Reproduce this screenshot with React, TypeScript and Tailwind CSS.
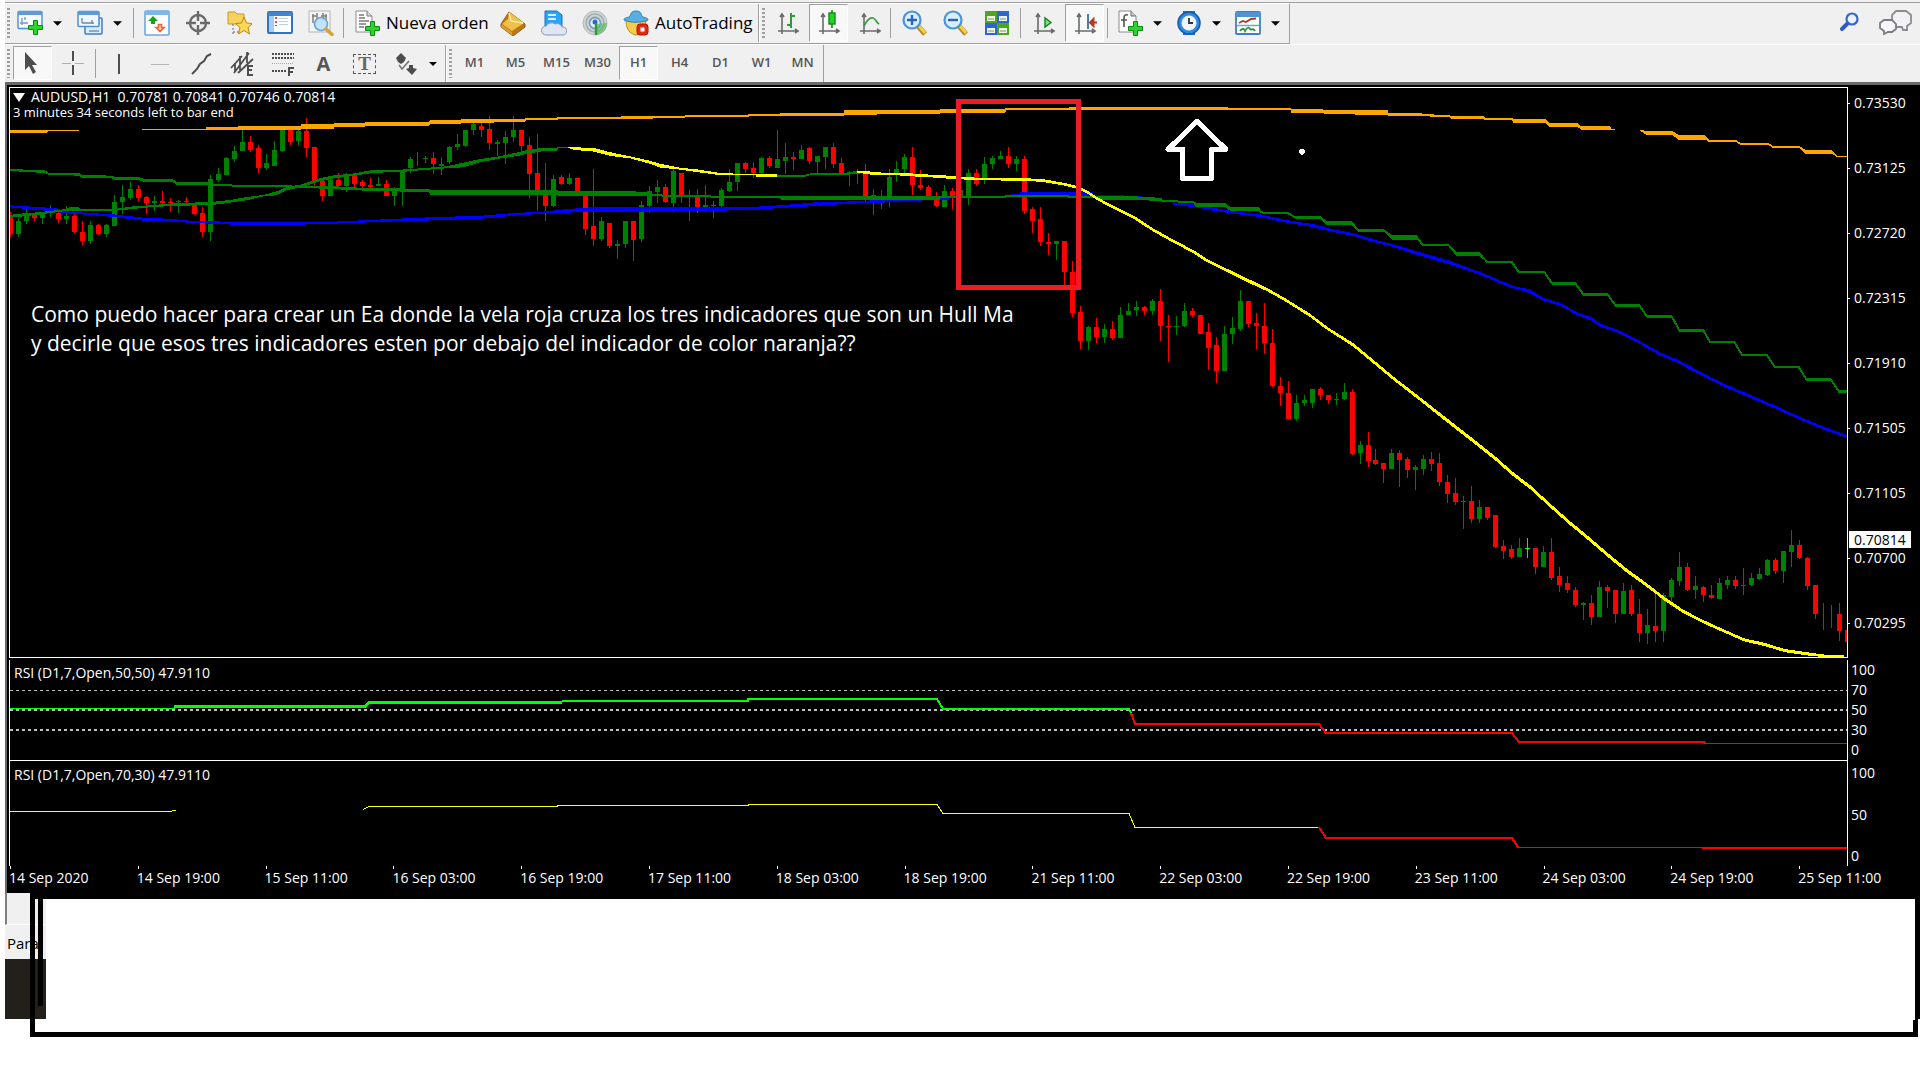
import React from 'react';
import type { ReactNode } from 'react';

/* ---------- toolbar icons ---------- */

function Svg({ children }: { children: ReactNode }) {
  return (
    <svg viewBox="0 0 26 26" className="block h-[26px] w-[26px] shrink-0" aria-hidden="true">
      {children}
    </svg>
  );
}

const GreenPlus = ({ x, y }: { x: number; y: number }) => (
  <path
    transform={`translate(${x} ${y})`}
    d="M5.5 .5h4v5h5v4h-5v5h-4v-5h-5v-4h5z"
    fill="#2bd62b"
    stroke="#0a8a0f"
    strokeWidth="1"
  />
);

const AxisBase = () => (
  <path d="M7 4v20M3 21h20M5 7l2-3 2 3M20 19l3 2-3 2" fill="none" stroke="#6b6b6b" strokeWidth="1.6" />
);

const NewChart = () => (
  <Svg>
    <rect x="1" y="1.500" width="24" height="17" rx="1" fill="#f7fbff" stroke="#4a8fce" strokeWidth="1.4" />
    <rect x="1" y="1" width="24" height="4" fill="#5b9bd8" />
    <path d="M5 8v7M3 13h8M8 7v3" stroke="#7d98b5" strokeWidth="1.4" />
    <GreenPlus x={11} y={10} />
  </Svg>
);
const Profiles = () => (
  <Svg>
    <rect x="8" y="8" width="17" height="16" rx="1" fill="#dcebfa" stroke="#3f7fc0" strokeWidth="1.5" />
    <rect x="1" y="1.500" width="21" height="15" rx="1" fill="#f2f8ff" stroke="#4a8fce" strokeWidth="1.5" />
    <rect x="1" y="1" width="21" height="4" fill="#5b9bd8" />
    <path d="M5 8v5M5 13h12M15 10v4" stroke="#6e8bab" strokeWidth="1.4" fill="none" />
    <path d="M12 21h10" stroke="#6e8bab" strokeWidth="1.4" />
  </Svg>
);
const MarketWatch = () => (
  <Svg>
    <rect x="1" y="1" width="24" height="24" rx="1" fill="#fff" stroke="#6aa9e0" strokeWidth="1.6" />
    <rect x="1" y="1" width="24" height="4" fill="#7db8ec" />
    <path d="M9 6l5 5h-3v3H7v-3H4z" fill="#17a317" />
    <path d="M16 21.500l-4-4h2.500v-3h3v3H20z" fill="#ffd9c8" stroke="#f0632d" strokeWidth="1.6" />
  </Svg>
);
const DataWindow = () => (
  <Svg>
    <circle cx="13" cy="13" r="8" fill="none" stroke="#6b6b6b" strokeWidth="2.4" />
    <path d="M13 1v10M13 15v10M1 13h10M15 13h10" stroke="#6b6b6b" strokeWidth="2.4" />
  </Svg>
);
const Navigator = () => (
  <Svg>
    <path d="M2 2h7l2 2h7v10H2z" fill="#f5d35c" stroke="#c79a22" />
    <path d="M7 14v11M7 22h6" stroke="#888" strokeWidth="1.3" strokeDasharray="2 2" />
    <path d="M18 7l2.500 6 6 .5-4.500 4 1.500 6.500-5.500-3.500-5.500 3.500 1.500-6.500-4.500-4 6-.5z" fill="#ffd955" stroke="#b98717" />
  </Svg>
);
const Terminal = () => (
  <Svg>
    <rect x="1" y="2" width="24" height="21" rx="1" fill="#fff" stroke="#2f74bd" strokeWidth="2" />
    <rect x="1" y="2" width="24" height="4" fill="#3f86cf" />
    <rect x="2" y="6" width="5" height="16" fill="#a9cbee" />
    <path d="M9 7v9" stroke="#e02020" strokeWidth="1.6" strokeDasharray="2 2" />
    <path d="M12 8.500h9M12 11.500h9M12 14.500h9" stroke="#b9cfe6" />
  </Svg>
);
const Tester = () => (
  <Svg>
    <rect x="1" y="1" width="21" height="21" fill="#f4f4f4" stroke="#b5b5b5" />
    <path d="M5 4v9M4 6h4M9 3v10M15 3v8M18 4v6M13 6h6" stroke="#7e7e7e" strokeWidth="1.5" />
    <circle cx="13" cy="14" r="6.500" fill="#bfe0f8" fillOpacity=".9" stroke="#6ba3d6" strokeWidth="1.6" />
    <path d="M18 19l6 5.500" stroke="#d9a12b" strokeWidth="3.4" strokeLinecap="round" />
  </Svg>
);
const NewOrder = () => (
  <Svg>
    <path d="M2 1h11l5 5v16H2z" fill="#fff" stroke="#8a8a8a" />
    <path d="M13 1v5h5" fill="#ddd" stroke="#777" />
    <path d="M5 5h5M5 8h6M5 11h10M5 14h7M5 17h5" stroke="#7a7a7a" strokeWidth="1.4" />
    <GreenPlus x={11} y={11} />
  </Svg>
);
const MetaEditor = () => (
  <Svg>
    <path d="M9 2L25 14v3l-12 9L1 17v-3z" fill="#b97a14" stroke="#8f5f0e" />
    <path d="M9 2L24 13 12 21 2 14 8 9z" fill="#f0bf48" />
    <path d="M9 3l2 8 12 2" fill="none" stroke="#fff0b0" strokeWidth="1.4" />
    <path d="M2 15l10 7v3L1 17z" fill="#dca030" />
  </Svg>
);
const Cloud = () => (
  <Svg>
    <path d="M4 1h12l5 4v11H4z" fill="#2aa5f5" stroke="#1276c4" />
    <path d="M7 5h8M7 9h8" stroke="#d7f0ff" strokeWidth="2" />
    <path d="M5 25a4.500 4.500 0 0 1 0-9 6 6 0 0 1 9-2 5 5 0 0 1 7 3 4 4 0 0 1 1 8z" fill="#dfe5f2" stroke="#8794b8" />
  </Svg>
);
const Signals = () => (
  <Svg>
    <circle cx="13" cy="13" r="12" fill="#cfd5d6" stroke="#b2babb" />
    <circle cx="13" cy="13" r="9" fill="none" stroke="#9fb0ae" strokeWidth="1.5" />
    <circle cx="13" cy="13" r="5.500" fill="#e7eff5" stroke="#7d9cc0" strokeWidth="1.8" />
    <path d="M14 25V14c4 0 8-1 11-1 0 6-4 11-11 12z" fill="#54b85b" fillOpacity=".6" />
    <circle cx="13" cy="12" r="2.500" fill="#2b66c4" />
    <path d="M14 13v12" stroke="#2c9b35" strokeWidth="2.4" />
  </Svg>
);
const Auto = () => (
  <Svg>
    <path d="M3 10c0 8 3 14 10 15 6-1 10-7 10-15z" fill="#f7cd49" stroke="#bb8a1b" />
    <path d="M1 10c0-3 5-2 6-4s1-5 6-5 5 3 6 5 6 1 6 4c-5 3-19 3-24 0z" fill="#58aee0" stroke="#2d7fb5" />
    <rect x="14" y="14" width="11" height="11" rx="3" fill="#e32b14" stroke="#a81505" />
    <rect x="17.500" y="17.500" width="4" height="4" fill="#fff" />
  </Svg>
);
const Bars = () => (
  <Svg>
    <AxisBase />
    <path d="M16 3v15M12 15h4M16 6h4" stroke="#2f9a3a" strokeWidth="2" />
  </Svg>
);
const Candles = () => (
  <Svg>
    <AxisBase />
    <path d="M16 0v18" stroke="#1c7d22" strokeWidth="1.6" />
    <rect x="13" y="3" width="6" height="11" fill="#22d32a" stroke="#128a18" strokeWidth="1.4" />
  </Svg>
);
const LineChart = () => (
  <Svg>
    <AxisBase />
    <path d="M7 16c3-6 6-9 9-8s3 4 6 6" fill="none" stroke="#3f9a48" strokeWidth="1.8" />
  </Svg>
);
const Zoom = ({ minus }: { minus?: boolean }) => (
  <Svg>
    <path d="M16 16l7 8" stroke="#b8841b" strokeWidth="5" />
    <path d="M17 16l6 7" stroke="#f6d04b" strokeWidth="3" />
    <circle cx="10" cy="10" r="8.500" fill="#d9efff" stroke="#4b93d8" strokeWidth="2.2" />
    <path d={minus ? 'M5 10h10' : 'M5 10h10M10 5v10'} stroke="#2d62b4" strokeWidth="2.4" />
  </Svg>
);
const Tiles = () => (
  <Svg>
    <rect x="1" y="1" width="12" height="12" fill="#4ea61e" />
    <rect x="13" y="1" width="12" height="12" fill="#2d66d0" />
    <rect x="1" y="13" width="12" height="12" fill="#2d66d0" />
    <rect x="13" y="13" width="12" height="12" fill="#4ea61e" />
    <path d="M3 6h8v5H3zM15 6h8v5h-8zM3 18h8v5H3zM15 18h8v5h-8z" fill="#eef4ea" />
    <path d="M4 9h6M16 9h6M4 21h6M16 21h6" stroke="#9fb7a0" strokeWidth="1.4" />
  </Svg>
);
const AutoScroll = () => (
  <Svg>
    <AxisBase />
    <path d="M14 8v9l6-4.500z" fill="#7fe087" stroke="#188222" strokeWidth="1.4" />
  </Svg>
);
const ChartShift = () => (
  <Svg>
    <AxisBase />
    <path d="M16 4v15" stroke="#3b6e9c" strokeWidth="1.8" />
    <path d="M25 12.500h-7M21.500 9l-3.500 3.500 3.500 3.500z" stroke="#b63a17" strokeWidth="2" fill="#b63a17" />
  </Svg>
);
const Indicators = () => (
  <Svg>
    <path d="M2 1h12l5 5v16H2z" fill="#fff" stroke="#8a8a8a" />
    <path d="M14 1v5h5" fill="#ccc" stroke="#666" />
    <path d="M11 5c-3-1-4 1-4 3v9M4 10h6" fill="none" stroke="#555" strokeWidth="1.6" />
    <GreenPlus x={11} y={11} />
  </Svg>
);
const Clock = () => (
  <Svg>
    <path d="M7 1h12v4H7zM7 21h12v4H7z" fill="#1f6fc2" />
    <circle cx="13" cy="13" r="11" fill="#2e8be0" stroke="#155ba8" strokeWidth="1.5" />
    <circle cx="13" cy="13" r="7.500" fill="#eef6fd" />
    <path d="M13 8v5h4" fill="none" stroke="#333" strokeWidth="1.8" />
  </Svg>
);
const Template = () => (
  <Svg>
    <rect x="1" y="2" width="24" height="22" rx="1" fill="#fff" stroke="#3d7fc2" strokeWidth="1.8" />
    <rect x="1" y="2" width="24" height="5" fill="#5293d4" />
    <path d="M4 13l4-2 3 1 5-3 5-.5" fill="none" stroke="#b13922" strokeWidth="1.8" />
    <path d="M2 15.500h22" stroke="#6fa4d8" strokeWidth="1.5" />
    <path d="M5 21c2-3 4-3 5 0 2-4 4-4 5-2s3-2 5 2" fill="none" stroke="#2f9440" strokeWidth="1.8" />
  </Svg>
);

const Cursor = () => (
  <Svg>
    <path d="M5 2v18l4-4 4 8 3-2-4-7h5z" fill="#4d4d4d" />
  </Svg>
);
const Cross = () => (
  <Svg>
    <path d="M12 1v10M12 15v10" stroke="#4d4d4d" strokeWidth="2" />
    <path d="M1 13.500h9M14 13.500h9" stroke="#b0b0b0" strokeWidth="1" />
  </Svg>
);
const VLine = () => (
  <Svg>
    <path d="M13 3v20" stroke="#4d4d4d" strokeWidth="2" />
  </Svg>
);
const HLine = () => (
  <Svg>
    <path d="M4 13.500h18" stroke="#b5b5b5" strokeWidth="1" />
  </Svg>
);
const Trend = () => (
  <Svg>
    <path d="M4 23l5-5 3-5 4-3 3-5 4-2" fill="none" stroke="#4d4d4d" strokeWidth="2" />
  </Svg>
);
const Channel = () => (
  <Svg>
    <path d="M2 17L13 5M5 22L20 2M9 22L24 8M6 12v9M11 5v14M18 1v11" stroke="#4d4d4d" strokeWidth="1.8" fill="none" />
    <path d="M24 15h-5v9h5M19 19h4" stroke="#4d4d4d" strokeWidth="2" fill="none" />
  </Svg>
);
const Fibo = () => (
  <Svg>
    <path d="M2 3h22M2 7h22M2 20h14" stroke="#4d4d4d" strokeWidth="2" strokeDasharray="2 1" />
    <path d="M2 12.500h22" stroke="#aaa" strokeWidth="1" strokeDasharray="1 1" />
    <path d="M24 17h-5v8M19 21h4" stroke="#4d4d4d" strokeWidth="2" fill="none" />
  </Svg>
);
const LetterA = () => <span className="text-[20px] leading-[26px] font-bold text-[#555]">A</span>;
const LabelT = () => (
  <span className="block border border-dashed border-[#555] px-1 font-['Liberation_Serif',serif] text-[19px] leading-[18px] font-bold text-[#666]">
    T
  </span>
);
const Shapes = () => (
  <Svg>
    <path d="M8 2l5 5-2 4-3 2-3-2-2-4z" fill="#4d4d4d" />
    <path d="M6 14l3 4 7-8" fill="none" stroke="#777" strokeWidth="1.6" />
    <path d="M16 14h4v3l4 1-5 6-6-6 3-1z" fill="#4d4d4d" />
  </Svg>
);

/* ---------- toolbar parts ---------- */

const Grip = () => (
  <span className="my-1 ml-[2px] w-[3px] shrink-0 bg-[repeating-linear-gradient(to_bottom,#a0a0a0_0_2px,#f0f0f0_2px_4px)]" />
);
const Sep = () => <span className="my-1 w-px shrink-0 bg-[#a0a0a0]" />;

function Tool({ label, children, pressed }: { label: string; children: ReactNode; pressed?: boolean }) {
  return (
    <button
      type="button"
      aria-label={label}
      aria-pressed={pressed}
      className={
        pressed
          ? 'mx-px flex w-[39px] shrink-0 items-center justify-center border border-t-[#a0a0a0] border-r-white border-b-white border-l-[#a0a0a0] bg-[#f8f8f8]'
          : 'flex w-[41px] shrink-0 items-center justify-center'
      }
    >
      {children}
    </button>
  );
}
function Menu({ label, small, children }: { label: string; small?: boolean; children: ReactNode }) {
  return (
    <button type="button" aria-label={label} aria-haspopup="menu" className="flex shrink-0 items-center gap-[10px] px-1">
      {children}
      <svg viewBox="0 0 10 5" className={small ? 'h-1 w-2' : 'h-[5px] w-[9px]'} aria-hidden="true">
        <path d="M0 0h10L5 5z" fill="#000" />
      </svg>
    </button>
  );
}

const timeframes = ['M1', 'M5', 'M15', 'M30', 'H1', 'H4', 'D1', 'W1', 'MN'];

function Toolbars() {
  return (
    <header className="bg-[#f0f0f0] pt-[2px]">
      <div className="flex justify-between border-t border-[#a0a0a0]">
        <div className="flex h-[41px] border-t border-r border-b border-t-white border-r-[#a0a0a0] border-b-[#a0a0a0] pb-px">
          <Grip />
          <div className="flex gap-[7px] pr-1 pl-[3px]">
            <Menu label="Nuevo gráfico"><NewChart /></Menu>
            <Menu label="Perfiles"><Profiles /></Menu>
          </div>
          <div className="w-[3px]" />
          <Sep />
          <div className="flex px-[2px]">
            <Tool label="Observación del mercado"><MarketWatch /></Tool>
            <Tool label="Ventana de datos"><DataWindow /></Tool>
            <Tool label="Navegador"><Navigator /></Tool>
            <Tool label="Terminal"><Terminal /></Tool>
            <Tool label="Probador"><Tester /></Tool>
          </div>
          <Sep />
          <button type="button" className="flex w-[148px] items-center gap-[6px] pl-[10px] text-[17px] whitespace-nowrap text-black">
            <NewOrder />
            Nueva orden
          </button>
          <Tool label="MetaEditor"><MetaEditor /></Tool>
          <Tool label="Nube"><Cloud /></Tool>
          <Tool label="Señales"><Signals /></Tool>
          <button type="button" className="flex w-[143px] items-center gap-[6px] pl-2 text-[17px] whitespace-nowrap text-black">
            <Auto />
            AutoTrading
          </button>
          <span className="w-px shrink-0 bg-[#a0a0a0]" />
          <span className="w-px shrink-0 bg-white" />
          <Grip />
          <div className="flex pl-[2px]">
            <Tool label="Barras"><Bars /></Tool>
            <Tool label="Velas" pressed><Candles /></Tool>
            <Tool label="Línea"><LineChart /></Tool>
          </div>
          <Sep />
          <div className="flex px-[3px]">
            <Tool label="Acercar"><Zoom /></Tool>
            <Tool label="Alejar"><Zoom minus /></Tool>
            <Tool label="Mosaico"><Tiles /></Tool>
          </div>
          <Sep />
          <div className="flex px-[2px]">
            <Tool label="Desplazamiento automático"><AutoScroll /></Tool>
            <Tool label="Desplazar gráfico" pressed><ChartShift /></Tool>
          </div>
          <Sep />
          <div className="flex gap-[6px] px-[5px]">
            <Menu label="Indicadores"><Indicators /></Menu>
            <Menu label="Periodos"><Clock /></Menu>
            <Menu label="Plantillas"><Template /></Menu>
          </div>
        </div>
        <div className="flex items-center gap-[18px] pr-[7px] pb-1">
          <button type="button" aria-label="Buscar">
            <svg viewBox="0 0 24 24" className="h-6 w-6" aria-hidden="true">
              <circle cx="15" cy="9" r="5.500" fill="#eaf1ff" stroke="#3566cc" strokeWidth="2.2" />
              <path d="M10 14l-5 5" stroke="#2e5cc0" strokeWidth="4" strokeLinecap="round" />
            </svg>
          </button>
          <button type="button" aria-label="Chat">
            <svg viewBox="0 0 34 26" className="h-[26px] w-[34px]" aria-hidden="true">
              <path d="M17 2h10l5 4v8l-4 3v4h-4l-1-3h-5l-5-4V6z" fill="#f2f2f6" stroke="#8c8c8c" strokeWidth="1.8" />
              <path d="M5 11h8l4 4v5l-4 3H9l-4 2v-3l-4-3v-5z" fill="#f6f6fb" stroke="#7d7d7d" strokeWidth="1.8" />
            </svg>
          </button>
        </div>
      </div>
      <div className="flex h-[38px] border-t border-white">
        <Grip />
        <div className="flex pt-px pb-[2px] pl-[2px]">
          <Tool label="Cursor" pressed><Cursor /></Tool>
          <Tool label="Cruz"><Cross /></Tool>
        </div>
        <div className="w-px" />
        <Sep />
        <div className="flex pl-[2px]">
          <Tool label="Línea vertical"><VLine /></Tool>
          <Tool label="Línea horizontal"><HLine /></Tool>
          <Tool label="Línea de tendencia"><Trend /></Tool>
          <Tool label="Canal equidistante"><Channel /></Tool>
          <Tool label="Retroceso de Fibonacci"><Fibo /></Tool>
          <Tool label="Texto"><LetterA /></Tool>
          <Tool label="Etiqueta de texto"><LabelT /></Tool>
          <div className="flex w-[60px] pl-1">
            <Menu label="Flechas" small><Shapes /></Menu>
          </div>
        </div>
        <span className="w-px bg-[#a0a0a0]" />
        <span className="w-px bg-white" />
        <Grip />
        <div className="flex border-r border-[#a0a0a0] pt-px pb-[2px] pl-[2px]">
          {timeframes.map((t) => (
            <Tool key={t} label={t} pressed={t === 'H1'}>
              <span className="text-[13px] font-semibold text-[#555]">{t}</span>
            </Tool>
          ))}
        </div>
      </div>
    </header>
  );
}

/* ---------- price chart (three drawing units per pixel) ---------- */

type Candle = ['G' | 'R' | 'L', number, number, number, number];

const firstCandles: Candle[] = [
  ['R', 395, 410, 462, 470], ['G', 415, 423, 462, 470], ['G', 388, 400, 423, 432], ['R', 400, 405, 414, 423], ['G', 398, 402, 414, 432],
  ['G', 375, 388, 400, 411], ['R', 397, 399, 417, 429], ['G', 378, 408, 417, 432], ['R', 402, 408, 456, 462], ['R', 423, 456, 483, 495],
  ['G', 423, 435, 483, 491], ['R', 432, 435, 462, 465], ['G', 432, 435, 462, 470], ['G', 345, 366, 438, 438], ['G', 315, 351, 366, 402],
  ['G', 306, 327, 354, 360], ['R', 315, 327, 354, 366], ['R', 348, 351, 369, 402], ['G', 348, 363, 369, 393], ['R', 333, 363, 370, 375],
  ['R', 354, 366, 370, 396], ['G', 360, 363, 366, 399], ['R', 351, 363, 366, 369], ['R', 372, 375, 402, 405], ['R', 381, 399, 456, 470],
  ['G', 285, 297, 456, 483], ['G', 264, 282, 300, 306], ['G', 231, 234, 285, 285], ['G', 198, 213, 237, 246], ['G', 150, 186, 213, 213],
  ['R', 168, 186, 210, 216], ['R', 195, 204, 264, 279], ['G', 222, 249, 264, 270], ['G', 183, 210, 258, 258], ['G', 147, 150, 213, 216],
  ['R', 147, 150, 186, 195], ['G', 150, 153, 183, 198], ['R', 114, 153, 204, 231], ['R', 201, 201, 306, 318], ['R', 300, 303, 348, 363],
  ['G', 297, 300, 348, 348], ['R', 279, 300, 318, 318], ['G', 279, 282, 318, 336], ['R', 282, 285, 312, 321], ['R', 300, 306, 318, 327],
  ['R', 294, 315, 321, 333], ['G', 291, 312, 318, 318], ['R', 300, 312, 348, 348], ['G', 321, 333, 348, 378], ['G', 270, 273, 330, 378],
  ['G', 231, 237, 264, 279], ['R', 216, 231, 231, 258], ['G', 228, 234, 237, 249], ['R', 216, 234, 252, 282], ['G', 231, 252, 258, 285],
  ['G', 198, 201, 246, 252], ['G', 162, 192, 201, 210], ['G', 150, 150, 198, 201], ['G', 126, 132, 150, 165], ['R', 129, 138, 150, 171],
  ['R', 108, 147, 189, 210], ['G', 180, 186, 192, 228], ['G', 153, 171, 189, 252], ['G', 108, 150, 171, 186], ['R', 150, 150, 198, 213],
  ['R', 171, 195, 282, 354], ['R', 162, 279, 333, 393], ['R', 249, 345, 378, 423], ['G', 285, 297, 378, 381], ['R', 285, 291, 312, 315],
  ['G', 279, 294, 312, 315], ['R', 294, 294, 339, 339], ['R', 345, 345, 447, 465], ['R', 267, 438, 477, 498], ['G', 411, 423, 477, 483],
  ['R', 429, 429, 498, 504], ['G', 480, 492, 498, 537], ['G', 423, 423, 492, 504], ['R', 423, 423, 480, 543], ['G', 363, 375, 477, 486],
  ['G', 318, 333, 378, 399], ['G', 300, 321, 336, 369], ['R', 312, 321, 366, 369], ['G', 267, 273, 369, 396], ['R', 279, 279, 351, 369],
  ['G', 330, 345, 348, 423], ['R', 327, 348, 387, 399], ['G', 315, 375, 381, 396], ['G', 363, 375, 378, 414], ['G', 324, 330, 378, 381],
  ['G', 267, 306, 333, 336], ['G', 249, 249, 306, 333], ['R', 246, 249, 267, 279], ['R', 246, 264, 279, 294], ['G', 231, 234, 279, 282],
  ['R', 228, 234, 258, 264], ['G', 150, 237, 264, 264], ['G', 189, 231, 243, 282], ['R', 216, 231, 237, 270], ['G', 195, 210, 237, 237],
  ['R', 201, 204, 243, 252], ['G', 228, 228, 246, 279], ['G', 201, 201, 231, 267], ['R', 189, 201, 252, 264], ['R', 234, 249, 279, 282],
  ['R', 273, 280, 283, 318], ['G', 267, 273, 282, 312], ['R', 252, 282, 348, 363], ['R', 327, 345, 348, 405], ['R', 330, 366, 369, 387],
  ['G', 267, 291, 366, 381], ['G', 243, 267, 279, 306], ['G', 222, 231, 267, 279], ['R', 201, 231, 315, 345], ['R', 270, 315, 324, 330],
  ['R', 315, 321, 348, 348], ['R', 336, 357, 378, 381], ['G', 315, 333, 381, 381], ['R', 324, 333, 348, 387], ['G', 320, 330, 348, 380],
  ['G', 267, 279, 351, 375], ['R', 267, 279, 312, 318], ['G', 231, 252, 297, 312], ['G', 228, 234, 252, 267], ['G', 213, 228, 237, 237],
  ['R', 201, 228, 252, 264], ['G', 228, 237, 252, 273], ['R', 228, 237, 393, 402], ['R', 381, 387, 423, 459], ['R', 381, 417, 486, 498],
  ['R', 459, 486, 492, 525], ['G', 483, 483, 492, 540], ['R', 483, 483, 576, 615], ['R', 543, 576, 699, 711], ['R', 678, 696, 783, 807],
  ['G', 738, 741, 783, 810], ['R', 714, 741, 771, 789], ['G', 732, 747, 771, 789], ['R', 723, 747, 774, 780], ['G', 681, 705, 774, 774],
  ['G', 669, 693, 705, 705], ['G', 663, 681, 690, 708], ['R', 678, 681, 693, 705], ['G', 657, 663, 693, 705], ['R', 627, 663, 738, 783],
  ['R', 705, 738, 741, 846], ['G', 708, 738, 741, 765], ['G', 669, 693, 738, 741], ['R', 684, 693, 705, 711], ['R', 705, 705, 762, 762],
  ['R', 729, 756, 804, 870], ['R', 771, 795, 873, 909], ['G', 738, 762, 873, 873], ['G', 711, 744, 762, 792], ['G', 630, 663, 747, 753],
  ['R', 663, 663, 732, 741], ['R', 699, 729, 738, 807], ['R', 669, 738, 789, 822], ['R', 747, 789, 918, 921], ['R', 891, 918, 939, 978],
  ['R', 903, 939, 1017, 1020], ['G', 945, 969, 1017, 1023], ['G', 945, 960, 969, 978], ['G', 927, 927, 969, 984], ['R', 921, 927, 945, 960],
  ['R', 945, 945, 960, 972], ['G', 939, 957, 960, 975], ['G', 909, 936, 957, 960], ['R', 927, 936, 1122, 1125], ['G', 1083, 1095, 1119, 1152],
  ['R', 1056, 1095, 1143, 1161], ['R', 1107, 1140, 1152, 1156], ['R', 1149, 1149, 1167, 1209], ['G', 1107, 1119, 1167, 1167],
  ['R', 1110, 1119, 1140, 1221], ['R', 1131, 1137, 1170, 1194], ['G', 1155, 1161, 1170, 1230],
];

/* the closing stretch of the series, measured from 900 units down */
const lastCandles: Candle[] = [
  ['G', 225, 237, 267, 285], ['R', 216, 237, 252, 273], ['R', 219, 249, 306, 318], ['R', 285, 306, 342, 369], ['R', 294, 339, 366, 375],
  ['R', 348, 363, 366, 447], ['R', 318, 363, 417, 429], ['G', 360, 381, 417, 429], ['R', 381, 381, 414, 420], ['R', 405, 405, 501, 504],
  ['R', 480, 498, 513, 537], ['R', 495, 507, 531, 537], ['G', 474, 504, 531, 531], ['L', 474, 504, 507, 534], ['R', 504, 504, 561, 582],
  ['G', 498, 516, 561, 561], ['R', 474, 516, 594, 600], ['R', 561, 588, 615, 636], ['R', 588, 609, 630, 639], ['R', 621, 630, 675, 681],
  ['G', 666, 669, 675, 720], ['R', 645, 669, 711, 735], ['G', 603, 621, 711, 711], ['R', 615, 621, 633, 684], ['R', 630, 630, 702, 729],
  ['G', 609, 633, 702, 702], ['R', 615, 630, 702, 708], ['R', 657, 702, 759, 786], ['G', 687, 735, 759, 792], ['R', 639, 738, 753, 786],
  ['G', 639, 645, 753, 786], ['G', 594, 600, 651, 681], ['G', 516, 561, 603, 618], ['R', 549, 561, 630, 633], ['G', 588, 618, 630, 657],
  ['R', 618, 621, 645, 666], ['R', 615, 645, 654, 657], ['G', 594, 609, 657, 657], ['G', 588, 600, 615, 627], ['R', 588, 600, 618, 627],
  ['G', 564, 615, 618, 645], ['G', 579, 594, 615, 618], ['G', 564, 582, 597, 600], ['G', 537, 540, 585, 588], ['R', 534, 540, 573, 582],
  ['G', 513, 513, 573, 609], ['G', 450, 495, 516, 561], ['R', 480, 495, 534, 537], ['R', 531, 534, 618, 630], ['R', 615, 615, 702, 717],
  ['G', 669, 669, 669, 750], ['R', 675, 675, 675, 744], ['R', 669, 702, 753, 783], ['R', 735, 750, 786, 832],
];

const candles: Candle[] = [
  ...firstCandles,
  ...lastCandles.map(([c, h, t, b, l]): Candle => [c, h + 900, t + 900, b + 900, l + 900]),
];
const candleFill = { G: '#008000', R: '#ff0000', L: '#00ff00' };

/* a point is x, y and the line's thickness there */
type P = [number, number, number];
const at = (dx: number, dy: number, pts: P[]): P[] => pts.map(([x, y, w]): P => [x + dx, y + dy, w]);

function Ribbon({ pts, color, core = 4 }: { pts: P[]; color: string; core?: number }) {
  const top = pts.map(([x, y, w]) => `${x},${y - w / 2}`);
  const bottom = [...pts].reverse().map(([x, y, w]) => `${x},${y + w / 2}`);
  return (
    <g fill={color} stroke={color}>
      <polygon points={[...top, ...bottom].join(' ')} strokeWidth="0" />
      <polyline points={pts.map(([x, y]) => `${x},${y}`).join(' ')} fill="none" strokeWidth={core} />
    </g>
  );
}

const orange: P[][] = [
  [[30, 155, 8], [141, 155, 8], [142, 152, 3], [237, 152, 3]],
  [
    [426, 149, 3], [618, 149, 3], [619, 145, 8], [714, 145, 8], [715, 143, 11], [903, 143, 11], [904, 139, 13], [1001, 139, 13],
    [1002, 135, 12], [1096, 134, 12], [1097, 132, 12], [1288, 131, 12], [1289, 126, 12], [1384, 126, 12], [1385, 122, 11], [1482, 122, 11],
    ...at(1440, 0, [
      [42, 121, 8], [135, 121, 8], [136, 117, 6], [231, 117, 6], [232, 114, 6], [423, 114, 6], [424, 113, 9], [520, 113, 9],
      [521, 110, 6], [615, 110, 6], [616, 108, 6], [805, 108, 6], [806, 105, 6], [900, 105, 6], [901, 103, 8], [1092, 103, 8],
      [1093, 97, 14], [1190, 97, 14], [1191, 96, 10], [1379, 96, 10], [1380, 93, 12],
    ]),
    ...at(2820, 0, [
      [0, 93, 12], [195, 93, 12], [196, 87, 6], [385, 87, 6], [386, 86, 9], [863, 86, 9], [864, 88, 6], [1053, 88, 6],
      [1054, 93, 11], [1150, 93, 11], [1151, 96, 12], [1245, 96, 12], [1246, 98, 14], [1343, 98, 14], [1344, 104, 8], [1440, 104, 8],
    ]),
    ...at(4320, -240, [
      [0, 348, 6], [30, 348, 6], [32, 352, 8], [130, 352, 8], [135, 357, 6], [216, 357, 6], [219, 362, 12], [315, 362, 12],
      [330, 375, 12], [412, 375, 12], [424, 384, 10], [510, 384, 10], [514, 388, 3], [525, 388, 3],
    ]),
  ],
  at(4320, -240, [
    [600, 391, 3], [620, 399, 12], [698, 399, 12], [715, 412, 14], [795, 412, 14], [808, 423, 6], [887, 423, 6], [903, 432, 6],
    [985, 432, 6], [1000, 441, 6], [1078, 441, 6], [1097, 456, 12], [1175, 456, 12], [1192, 469, 3], [1222, 469, 3],
  ]),
];

const slowGreen: P[] = [
  [30, 270, 6], [135, 275, 8], [145, 281, 6], [237, 283, 8], [245, 289, 9], [335, 291, 8], [345, 296, 9], [420, 297, 9], [430, 301, 9],
  [520, 303, 9], [530, 310, 9], [630, 311, 9], [640, 315, 6], [714, 317, 6], [905, 320, 6], [1000, 323, 9], [1096, 328, 8],
  [1200, 330, 9], [1288, 332, 8], [1290, 337, 15], [1672, 337, 14], [1674, 340, 14], [1866, 340, 14], [1950, 342, 12], [1960, 346, 5],
  [2155, 350, 5], [2340, 351, 6], [2342, 353, 12], [2819, 353, 12],
  ...at(2820, 0, [
    [0, 351, 6], [195, 351, 6], [197, 348, 4], [385, 348, 4], [387, 351, 6], [465, 351, 8], [480, 353, 12], [570, 354, 12], [663, 358, 9],
    [667, 363, 5], [760, 366, 7], [770, 375, 12], [855, 375, 12], [870, 386, 12], [955, 387, 12], [968, 399, 6], [1045, 400, 6],
    [1065, 412, 8], [1140, 412, 8], [1160, 429, 12], [1236, 429, 12], [1255, 451, 7], [1333, 452, 7], [1355, 472, 14], [1428, 472, 14],
  ]),
  ...at(4200, 360, [
    [50, 112, 14], [68, 134, 6], [145, 134, 6], [168, 161, 12], [238, 161, 12], [262, 186, 6], [335, 186, 6], [357, 217, 4], [433, 217, 4],
    [456, 250, 8], [526, 250, 8], [550, 283, 8], [623, 283, 8], [646, 316, 8], [718, 316, 8], [740, 349, 8], [815, 349, 8],
    [838, 391, 8], [910, 391, 8], [930, 426, 6], [1003, 426, 6], [1026, 465, 6], [1101, 465, 6], [1124, 501, 6], [1196, 501, 6],
    [1219, 538, 8], [1292, 538, 8], [1316, 574, 9], [1342, 574, 9],
  ]),
];

const blue: P[][] = [
  [
    [30, 379, 6], [66, 382, 8], [120, 386, 9], [165, 390, 12], [200, 397, 6], [270, 402, 6], [340, 407, 8], [425, 417, 9], [520, 421, 8],
    [580, 426, 6], [714, 430, 9], [880, 430, 9], [1000, 428, 6], [1096, 424, 7], [1215, 419, 8], [1310, 416, 10], [1440, 412, 9],
    ...at(1440, 0, [
      [90, 404, 8], [200, 397, 6], [255, 393, 10], [330, 389, 14], [590, 388, 12], [830, 385, 10], [900, 380, 8], [1000, 373, 11],
      [1100, 368, 7], [1200, 364, 8], [1300, 361, 3], [1335, 359, 3],
    ]),
  ],
  at(2820, 0, [[0, 356, 6], [27, 356, 6]]),
  at(2820, 0, [[192, 346, 3], [240, 345, 3], [241, 341, 12], [458, 341, 12], [462, 346, 3], [570, 349, 4], [625, 353, 4], [650, 362, 5]]),
  [
    ...at(2820, 0, [
      [700, 371, 6], [770, 378, 9], [810, 386, 9], [870, 396, 8], [960, 407, 8], [1040, 424, 6], [1120, 437, 10], [1180, 452, 8],
      [1240, 464, 9], [1300, 482, 7], [1370, 500, 8],
    ]),
    ...at(4200, 360, [
      [60, 162, 10], [150, 188, 11], [240, 220, 6], [335, 260, 5], [390, 274, 12], [430, 298, 8], [480, 313, 9], [535, 343, 5],
      [575, 357, 12], [600, 375, 8], [650, 393, 9], [720, 428, 7], [780, 462, 6], [830, 482, 10], [930, 535, 9], [1000, 568, 9],
      [1060, 593, 9], [1130, 623, 9], [1200, 655, 8], [1270, 684, 9], [1342, 710, 8],
    ]),
  ],
];

const fastGreen: P[][] = [
  [
    [30, 409, 9], [66, 405, 9], [120, 400, 7], [190, 391, 6], [212, 387, 12], [237, 388, 12], [240, 389, 6], [350, 389, 6],
    [400, 383, 8], [460, 378, 6], [520, 374, 8], [640, 370, 9], [690, 364, 8], [740, 356, 10], [790, 347, 4], [830, 340, 12],
    [860, 326, 9], [905, 317, 8], [960, 299, 10], [1000, 291, 9], [1060, 284, 7], [1120, 274, 9], [1210, 272, 7], [1260, 268, 6],
    [1340, 262, 6], [1390, 255, 14], [1440, 242, 10], [1500, 232, 7], [1550, 223, 11], [1590, 214, 12], [1625, 209, 10],
    [1672, 208, 9], [1674, 203, 3], [1708, 202, 3],
  ],
  [[2330, 288, 6], [2415, 287, 6], [2440, 281, 5], [2540, 281, 6], [2570, 277, 9]],
];
const yellow: P[][] = [
  at(1440, 0, [
    [264, 202, 3], [283, 206, 8], [340, 209, 11], [390, 222, 11], [450, 232, 6], [510, 247, 9], [540, 257, 11], [600, 266, 6],
    [650, 272, 8], [712, 281, 7], [760, 283, 5], [828, 284, 4], [830, 287, 8], [890, 287, 8],
  ]),
  [
    ...at(1440, 0, [
      [1130, 276, 8], [1165, 277, 8], [1175, 281, 4], [1285, 283, 6], [1310, 286, 8], [1335, 287, 7], [1380, 290, 9],
    ]),
    ...at(2820, 0, [
      [50, 293, 9], [110, 297, 6], [250, 298, 6], [310, 302, 9], [370, 312, 7], [410, 322, 7], [440, 335, 8], [470, 355, 8],
      [520, 382, 9], [580, 411, 8], [640, 450, 9], [690, 478, 9], [760, 515, 9], [800, 541, 8], [850, 566, 10], [920, 600, 11],
      [980, 628, 10], [1040, 662, 9], [1110, 706, 10], [1160, 744, 9], [1240, 795, 11], [1300, 845, 11], [1360, 895, 11], [1440, 957, 11],
    ]),
    [4327, 1010, 12], [4419, 1082, 12], [4488, 1137, 12], [4534, 1178, 12], [4591, 1222, 12], [4649, 1275, 12], [4706, 1326, 12],
    [4764, 1374, 12], [4821, 1423, 12], [4878, 1470, 12], [4936, 1512, 11], [4993, 1556, 11], [5051, 1595, 10], [5108, 1624, 10],
    [5165, 1650, 9], [5234, 1680, 9], [5292, 1693, 10], [5355, 1712, 9], [5418, 1721, 10], [5475, 1728, 6], [5533, 1730, 4],
  ],
];

function PriceChart() {
  return (
    <svg
      viewBox="30 24 5511 1707"
      preserveAspectRatio="none"
      className="block h-[569px] w-full"
      role="img"
      aria-label="AUDUSD H1"
      shapeRendering="crispEdges"
    >
      {candles.map(([c, h, t, b, l], i) => {
        const x = Math.round((31 + i * 23.95) / 3) * 3;
        return (
          <g key={i} fill={candleFill[c]}>
            <rect x={x - 1} y={h} width="3" height={l - h} />
            <rect x={x - 7} y={t} width="15" height={b - t} />
          </g>
        );
      })}
      {blue.map((p, i) => <Ribbon key={i} pts={p} color="#0000ff" core={i === 3 ? 8 : 4} />)}
      <Ribbon pts={slowGreen} color="#008000" core={6} />
      {fastGreen.map((p, i) => <Ribbon key={i} pts={p} color="#008000" />)}
      {yellow.map((p, i) => <Ribbon key={i} pts={p} color="#ffff00" core={i === 1 ? 8 : 5} />)}
      {orange.map((p, i) => <Ribbon key={i} pts={p} color="#ffa500" />)}
      <rect x="2876" y="64" width="359" height="558" fill="none" stroke="#ed1c24" strokeWidth="15" />
      <path
        d="M3591 124L3504 208H3548V295H3635V208H3678Z"
        fill="none"
        stroke="#fff"
        strokeWidth="15"
        strokeLinejoin="round"
      />
      <circle cx="3906" cy="215" r="9" fill="#fff" />
    </svg>
  );
}

const prices = ['0.73530', '0.73125', '0.72720', '0.72315', '0.71910', '0.71505', '0.71105', '0.70700'];

function Levels({ y, thick }: { y: number; thick?: boolean }) {
  return <path d={`M10 ${y}H1847`} stroke="#c0c0c0" strokeWidth={thick ? 2 : 1} strokeDasharray="3 3" />;
}

const times = [
  '14 Sep 2020', '14 Sep 19:00', '15 Sep 11:00', '16 Sep 03:00', '16 Sep 19:00', '17 Sep 11:00', '18 Sep 03:00', '18 Sep 19:00',
  '21 Sep 11:00', '22 Sep 03:00', '22 Sep 19:00', '23 Sep 11:00', '24 Sep 03:00', '24 Sep 19:00', '25 Sep 11:00',
];

function ChartWindow() {
  return (
    <main className="border-t-[3px] border-l-2 border-[#696969] bg-black pt-[2px] pl-[2px] text-[14px] text-white">
      <section className="flex">
        <div className="relative min-w-0 flex-1 border border-white">
          <PriceChart />
          <div className="absolute top-px left-[3px] whitespace-pre">
            <p className="flex items-center gap-[6px] leading-4">
              <svg viewBox="0 0 12 9" className="h-[9px] w-3" aria-hidden="true">
                <path d="M0 0h12L6 9z" fill="#fff" />
              </svg>
              {'AUDUSD,H1  0.70781 0.70841 0.70746 0.70814'}
            </p>
            <p className="text-[13px] leading-[14px]">3 minutes 34 seconds left to bar end</p>
          </div>
          <p className="absolute top-[212px] left-[21px] text-[21px] leading-[29px] whitespace-nowrap">
            Como puedo hacer para crear un Ea donde la vela roja cruza los tres indicadores que son un Hull Ma
            <br />y decirle que esos tres indicadores esten por debajo del indicador de color naranja??
          </p>
        </div>
        <div className="relative w-[72px] shrink-0 pt-[6px]">
          <ul>
            {prices.map((p) => (
              <li key={p} className="flex h-[65px] items-start leading-5">
                <span className="mt-[10px] mr-1 h-px w-[2px] bg-white" />
                {p}
              </li>
            ))}
            <li className="flex items-start leading-5">
              <span className="mt-[10px] mr-1 h-px w-[2px] bg-white" />
              0.70295
            </li>
          </ul>
          <span className="absolute top-[444px] left-px w-[62px] bg-white pl-[5px] leading-[17px] text-black">0.70814</span>
        </div>
      </section>

      <section className="flex pt-[2px]">
        <div className="relative min-w-0 flex-1 border-r border-b border-l border-white">
          <svg viewBox="10 660 1837 100" preserveAspectRatio="none" className="block h-[100px] w-full" shapeRendering="crispEdges" fill="none" role="img" aria-label="RSI 50,50">
            <Levels y={690.5} />
            <Levels y={710} thick />
            <Levels y={730} thick />
            <path d="M10 708.500H175" stroke="#0f0" strokeWidth="1" />
            <path d="M174 706.500H365L369 702.500H562" stroke="#0f0" strokeWidth="3" />
            <path d="M562 701H748V699H937L943 709H1129L1131 713" stroke="#0f0" strokeWidth="2" />
            <path d="M1131 713L1135 724H1319L1326 733H1512L1519 742H1703L1706 743" stroke="#f00" strokeWidth="2" />
            <path d="M1703 743.500H1847" stroke="#f00" strokeWidth="1" />
          </svg>
          <p className="absolute top-[3px] left-1 leading-5">RSI (D1,7,Open,50,50) 47.9110</p>
        </div>
        <ul className="w-[72px] shrink-0 pl-[3px]">
          {['100', '70', '50', '30', '0'].map((v) => (
            <li key={v} className="h-5 leading-5">{v}</li>
          ))}
        </ul>
      </section>

      <section className="flex">
        <div className="relative min-w-0 flex-1 border-r border-l border-white">
          <svg viewBox="10 761 1837 105" preserveAspectRatio="none" className="block h-[105px] w-full" shapeRendering="crispEdges" fill="none" strokeWidth="1" role="img" aria-label="RSI 70,30">
            <path d="M10 811.500H172M172 810.500H176M363 809.500L369 806.500H557V805.500H748V804.500H937L943 813.500H1129L1135 827.500H1320" stroke="#ff0" />
            <path d="M1319 827L1326 838H1512L1518 847" stroke="#f00" strokeWidth="2" />
            <path d="M1517 847.500H1703" stroke="#f00" />
            <path d="M1702 848H1847" stroke="#f00" strokeWidth="2" />
          </svg>
          <p className="absolute top-1 left-1 leading-5">RSI (D1,7,Open,70,30) 47.9110</p>
        </div>
        <ul className="flex w-[72px] shrink-0 flex-col justify-between pt-[2px] pl-[3px] leading-5">
          <li>100</li>
          <li>50</li>
          <li>0</li>
        </ul>
      </section>

      <ol className="mr-[72px] flex h-[27px]">
        {times.map((t) => (
          <li key={t} className="w-[6.95%] shrink-0 leading-[18px] whitespace-nowrap">
            <span className="ml-px block h-[3px] w-px bg-white" />
            {t}
          </li>
        ))}
      </ol>
    </main>
  );
}

/* ---------- status strip partly covered by the drawn frame ---------- */

function Footer() {
  return (
    <footer className="relative pb-[18px] text-[15px] text-black">
      <div className="w-[41px] overflow-hidden">
        <div className="h-8 border-b border-l-2 border-b-white border-l-[#808080] bg-[#f0f0f0]" />
        <div className="h-[34px] bg-[#f0f0f0] pl-[2px] leading-[36px]">Para</div>
        <div className="h-[60px] bg-[#231f1b]" />
      </div>
      <div className="absolute top-0 right-0 bottom-[18px] w-[5px] bg-black" />
      <div className="absolute top-0 right-[2px] bottom-0 left-[25px] border-[5px] border-t-[6px] border-black">
        <div className="absolute top-0 bottom-[26px] left-[3px] w-[5px] bg-black" />
        <div className="absolute top-0 -right-[2px] bottom-3 left-[11px] bg-white" />
      </div>
    </footer>
  );
}

export default function App() {
  return (
    <div className="min-h-screen overflow-x-hidden bg-white pl-[5px] font-['Open_Sans','Noto_Sans',sans-serif]">
      <Toolbars />
      <ChartWindow />
      <Footer />
    </div>
  );
}
